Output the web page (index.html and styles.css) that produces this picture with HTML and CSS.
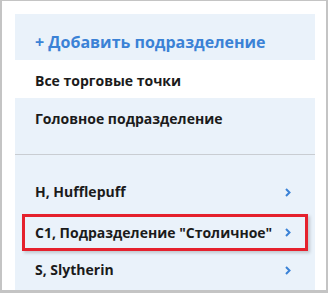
FILE: index.html
```html
<!DOCTYPE html>
<html lang="ru">

<head>
    <meta charset="UTF-8">
    <meta name="viewport" content="width=device-width, initial-scale=1.0">
    <title>Подразделения</title>
    <link rel="stylesheet" href="styles.css">
</head>

<body>
    <div class="frame">
        <div class="panel">
            <div class="add">+ Добавить подразделение</div>
            <div class="all">Все торговые точки</div>
            <div class="head">Головное подразделение</div>
            <ul class="list">
                <li class="item">
                    <span>H, Hufflepuff</span>
                    <svg class="chev" width="6" height="9" viewBox="0 0 6 9"><polyline points="1,1 4.5,4.5 1,8" /></svg>
                </li>
                <li class="item selected">
                    <span>С1, Подразделение "Столичное"</span>
                    <svg class="chev" width="6" height="9" viewBox="0 0 6 9"><polyline points="1,1 4.5,4.5 1,8" /></svg>
                </li>
                <li class="item">
                    <span>S, Slytherin</span>
                    <svg class="chev" width="6" height="9" viewBox="0 0 6 9"><polyline points="1,1 4.5,4.5 1,8" /></svg>
                </li>
            </ul>
        </div>
    </div>
</body>

</html>
```

FILE: styles.css
```css
* {
    padding: 0;
    margin: 0;
    box-sizing: border-box;
}

body {
    background-color: #c4c4c4;
    font-family: "Open Sans", "Noto Sans", sans-serif;
    font-weight: 700;
    color: #1b1b1b;
}

.frame {
    margin: 1px 2px 3px 2px;
    height: 289px;
    background-color: #fff;
    padding: 13px 11px 0 13px;
    overflow: hidden;
}

.panel {
    width: 300px;
    height: 276px;
    background-color: #eaf2fa;
    overflow: hidden;
}

.add {
    padding: 17px 20px 7px;
    font-size: 16px;
    line-height: 22px;
    color: #3b82d6;
}

.all {
    padding: 11px 20px 7px;
    font-size: 14px;
    line-height: 20px;
    background-color: #fff;
}

.head {
    padding: 11px 20px 25px;
    font-size: 14px;
    line-height: 20px;
    border-bottom: 1px solid #c9cdd2;
}

.list {
    list-style: none;
    padding-top: 18px;
}

.item {
    display: flex;
    align-items: center;
    justify-content: space-between;
    height: 38px;
    padding: 0 24px 0 20px;
    font-size: 14px;
    line-height: 20px;
}

.item.selected {
    height: 37px;
    margin: 3px 7px 0;
    padding: 0 14px 0 10px;
    border: 3px solid #e5212d;
    box-shadow: 2px 2px 3px rgba(0, 0, 0, 0.18);
}

.chev {
    fill: none;
    stroke: #3b82d6;
    stroke-width: 2;
}
```
